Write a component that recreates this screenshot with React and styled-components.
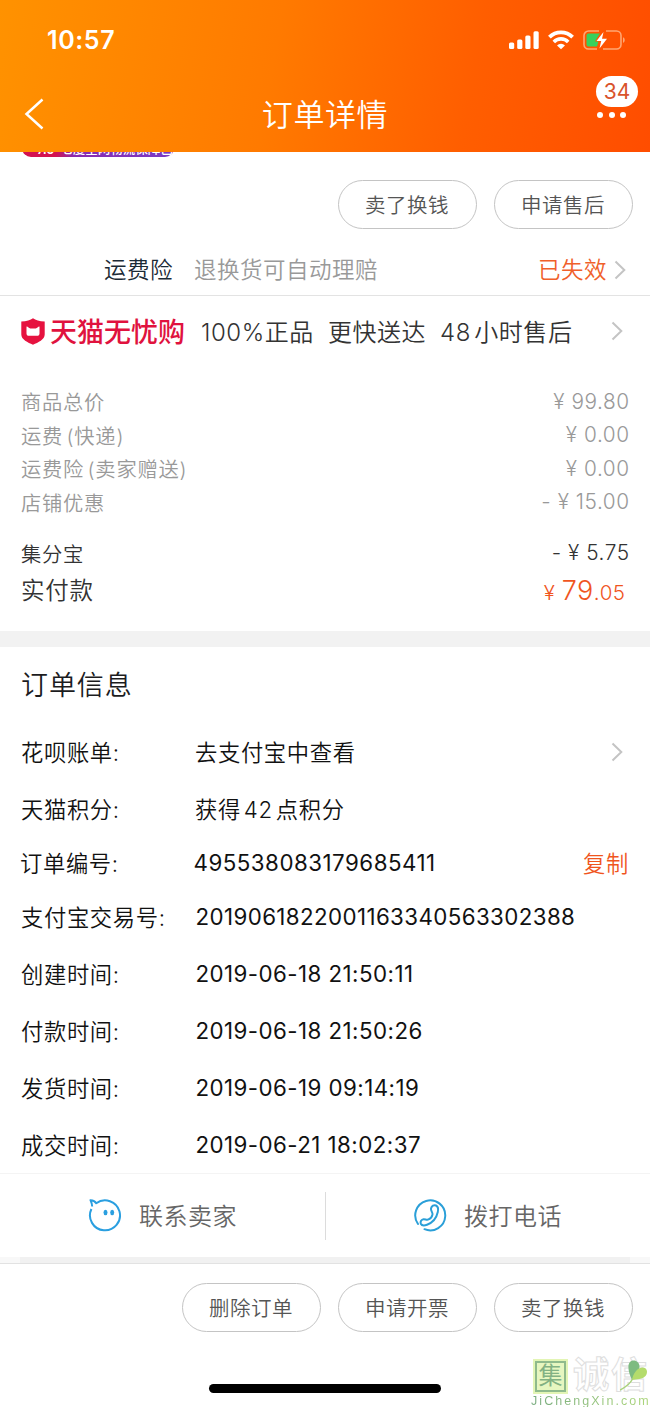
import React from 'react';
import styled, { createGlobalStyle } from 'styled-components';

const GlobalStyle = createGlobalStyle`
  * {
    box-sizing: border-box;
  }

  body {
    margin: 0;
    background: #fff;
    color: #1c1c1e;
    font-family: Inter, 'Noto Sans CJK SC', sans-serif;
    -webkit-font-smoothing: antialiased;
  }
`;

const StyledPage = styled.div`
  position: relative;
  width: 650px;
  height: 1407px;
  overflow: hidden;
  background: #fff;
`;

const StyledHeader = styled.header`
  height: 152px;
  background: linear-gradient(100deg, #ff9200 0%, #ff7a00 42%, #ff5e00 72%, #ff4d00 100%);
  color: #fff;
`;

const StyledStatusBar = styled.div`
  display: flex;
  align-items: center;
  justify-content: space-between;
  height: 80px;
  padding: 0 25px 0 47px;

  .time {
    font-size: 25px;
    font-weight: 600;
    letter-spacing: 0.6px;
  }

  .icons {
    display: flex;
    align-items: center;
    gap: 9px;
  }

  svg {
    display: block;
  }
`;

const StyledNav = styled.div`
  display: grid;
  grid-template-columns: 60px 1fr 60px;
  align-items: center;
  height: 70px;

  .back {
    padding: 2px 0 0 24px;
  }

  .title {
    margin: 0;
    font-size: 31px;
    font-weight: 350;
    letter-spacing: 0.6px;
    line-height: 40px;
    text-align: center;
  }

  .more {
    position: relative;
    display: flex;
    gap: 5.5px;
    padding-left: 7px;

    i {
      width: 6px;
      height: 6px;
      border-radius: 50%;
      background: #fff;
    }
  }

  .count {
    position: absolute;
    left: 6px;
    bottom: 11px;
    width: 42px;
    height: 31px;
    border-radius: 16px;
    background: #fff;
    color: #d9532b;
    font-size: 21px;
    line-height: 32px;
    text-align: center;
  }
`;

const StyledPromo = styled.div`
  display: flex;
  align-items: flex-end;
  height: 5px;
  margin-left: 22px;
  width: 152px;
  overflow: hidden;

  div {
    display: flex;
    flex: none;
    width: 152px;
    height: 22px;
    padding: 0 0 0 15px;
    border-radius: 0 0 9px 9px;
    background: linear-gradient(90deg, #d3134f 0 22%, #8a2bae 34%, #7a3cc4 100%);
    color: #fff;
    font-size: 12.5px;
    font-weight: 500;
    line-height: 29px;
    white-space: nowrap;
  }

  b {
    margin-right: 6px;
    font-weight: 600;
  }
`;

const StyledButtonRow = styled.div`
  display: flex;
  justify-content: flex-end;
  gap: 17px;
  padding: ${({ $top }) => $top}px 17px 0 0;
`;

const StyledPill = styled.button`
  width: 139px;
  height: 49px;
  padding: 0 1px 1px 0;
  border: 1px solid #c4c4c4;
  border-radius: 25px;
  background: #fff;
  color: #555;
  font-family: inherit;
  font-size: 20.5px;
  font-weight: 350;
  letter-spacing: 0.5px;
`;

const StyledInsurance = styled.div`
  display: flex;
  align-items: center;
  height: 67px;
  padding: 15px 24px 0 104px;
  border-bottom: 1px solid #e3e3e3;
  font-size: 22.5px;
  font-weight: 350;
  letter-spacing: 0.5px;

  span {
    padding-bottom: 3px;
  }

  .name {
    color: #1b2a36;
  }

  .desc {
    margin-left: 21px;
    color: #999;
  }

  .state {
    margin-left: auto;
    margin-right: 7px;
    color: #f0602a;
  }
`;

const StyledTmall = styled.div`
  display: flex;
  align-items: center;
  height: 70px;
  padding: 0 27px 0 21px;

  .brand {
    margin-left: 5px;
    padding-bottom: 2px;
    color: #e0123e;
    font-size: 27px;
    font-weight: 500;
  }

  .chevron {
    margin-left: auto;
  }
`;

const StyledPromises = styled.div`
  display: flex;
  gap: 14px;
  margin-left: 16px;
  padding-bottom: 2px;
  color: #333;
  font-size: 24px;
  font-weight: 350;
  letter-spacing: 0.55px;
  word-spacing: -4px;
`;

const StyledFees = styled.div`
  padding: 20px 21px 0;
  height: 265px;
`;

const StyledFee = styled.div`
  display: flex;
  align-items: center;
  justify-content: space-between;
  height: 33.5px;
  color: #999;
  font-size: 20.3px;
  font-weight: 350;
  letter-spacing: 0.75px;

  .label {
    padding-bottom: 3px;
    word-spacing: -3px;
  }

  .value {
    padding-bottom: 3px;
    margin-right: -0.6px;
    font-size: 20.8px;
    letter-spacing: 0.55px;
    white-space: pre;
  }
`;

const StyledCredit = styled(StyledFee)`
  height: 38px;
  margin-top: 15px;
  color: #333;
`;

const StyledTotal = styled(StyledFee)`
  height: 36px;
  color: #333;
  font-size: 23.5px;

  .label {
    padding-bottom: 5px;
  }

  .value {
    padding-right: 4px;
    padding-bottom: 2px;
    color: #f0551e;
    font-size: 20.5px;
  }

  big {
    font-size: 27px;
  }
`;

const StyledDivider = styled.div`
  height: 16px;
  background: #f2f2f2;
`;

const StyledInfoTitle = styled.h2`
  margin: 0;
  height: 76px;
  padding-left: 21px;
  font-size: 27px;
  font-weight: 350;
  letter-spacing: 0.9px;
  line-height: 78px;
`;

const StyledInfoRow = styled.div`
  display: flex;
  align-items: center;
  height: ${({ $short }) => ($short ? 51 : 57)}px;
  padding: 0 ${({ $chevron }) => ($chevron ? 27 : 21)}px 0 ${({ $short }) => ($short ? 20 : 21)}px;
  color: #111;
  font-size: 22.3px;
  font-weight: 350;
  letter-spacing: 0.65px;
  word-spacing: -4px;

  span {
    padding-bottom: 2px;
  }

  .label {
    width: ${({ $short }) => ($short ? 173 : 174)}px;
    white-space: nowrap;
  }

  .action {
    margin-left: auto;
    color: #f0551e;
  }

  .chevron {
    margin-left: auto;
  }
`;

const StyledDigits = styled.div`
  padding-left: 0.5px;
  font-weight: 380;
  letter-spacing: ${({ $spacing }) => $spacing}px;
  word-spacing: 0;
`;

const StyledContact = styled.div`
  display: grid;
  grid-template-columns: 1fr 1fr;
  align-items: center;
  height: 84px;
  border-top: 1px solid #f4f4f4;
`;

const StyledContactItem = styled.div`
  display: flex;
  align-items: center;
  height: 48px;
  padding-left: ${({ $bordered }) => ($bordered ? 87 : 88)}px;
  padding-bottom: 2px;
  border-left: ${({ $bordered }) => ($bordered ? '1px solid #dcdcdc' : 'none')};
  color: #666;
  font-size: 24px;
  font-weight: 350;
  letter-spacing: 0.5px;

  svg {
    margin-right: 17px;
  }
`;

const StyledBand = styled.div`
  height: 7px;
  border-bottom: 1px solid #e2e2e2;
  background: linear-gradient(90deg, #f8f8f8 0 20px, #f1f1f1 20px 630px, #f8f8f8 630px);
`;

const StyledHomeBar = styled.div`
  position: absolute;
  left: 209px;
  bottom: 14px;
  width: 232px;
  height: 9px;
  border-radius: 5px;
  background: #000;
`;

const StyledWatermark = styled.div`
  position: absolute;
  left: 531px;
  top: 1358px;
  width: 119px;

  .marks {
    display: flex;
    align-items: center;
    height: 36px;
    padding-left: 4px;
  }

  .seal {
    width: 31px;
    height: 31px;
    margin-right: 7px;
    outline: 2px solid #e3f5b5;
    border: 2px solid #8fba8c;
    background: #e6f6c0;
    color: #82b183;
    font-size: 24px;
    font-weight: 400;
    line-height: 26px;
    text-align: center;
  }

  .name {
    height: 36px;
    color: #fff;
    font-size: 36px;
    font-weight: 700;
    letter-spacing: 2px;
    line-height: 34px;
    white-space: nowrap;
    -webkit-text-stroke: 1px #dedede;
  }

  .leaf {
    position: absolute;
    left: 89px;
    top: 1px;
  }

  .domain {
    margin-top: 1px;
    color: transparent;
    background: linear-gradient(90deg, #79ac80, #acd67a);
    background-clip: text;
    font-family: 'Liberation Sans', Arial, sans-serif;
    font-size: 12.5px;
    letter-spacing: 2.05px;
    line-height: 12px;
    white-space: nowrap;
  }
`;

const Chevron = () => (
  <svg className="chevron" width="12" height="20" viewBox="0 0 12 20" fill="none">
    <path d="M1.5 1.5 10.3 10l-8.8 8.5" stroke="#c4c4c4" strokeWidth="2" />
  </svg>
);

const SignalIcon = () => (
  <svg width="30" height="20" viewBox="0 0 30 20" fill="#fff">
    <rect x="0" y="12.5" width="5.2" height="6.5" rx="1.5" />
    <rect x="8.2" y="9.5" width="5.2" height="9.5" rx="1.5" />
    <rect x="16.3" y="5.5" width="5.2" height="13.5" rx="1.5" />
    <rect x="24.5" y="1.2" width="5.2" height="17.8" rx="1.5" />
  </svg>
);

const WifiIcon = () => (
  <svg width="26" height="20" viewBox="0 0 26 20" fill="none" stroke="#fff">
    <path d="M1.4 7.2a16.3 16.3 0 0 1 23.2 0" strokeWidth="3.8" />
    <path d="M5.8 11.9a10.2 10.2 0 0 1 14.4 0" strokeWidth="3.6" />
    <path d="M13 19.2 9 15.4a5.7 5.7 0 0 1 8 0z" fill="#fff" stroke="none" />
  </svg>
);

const BatteryIcon = () => (
  <svg width="42" height="20" viewBox="0 0 42 20" fill="none">
    <path
      d="M16 1H5.5A4.5 4.5 0 0 0 1 5.5v9A4.5 4.5 0 0 0 5.5 19H14M23 1h10.5A4.5 4.5 0 0 1 38 5.5v9a4.5 4.5 0 0 1-4.5 4.5H20"
      stroke="#ffa672"
      strokeWidth="1.6"
    />
    <path d="M40 7.2c2.3.7 2.3 4.9 0 5.6z" fill="#ffa672" />
    <path d="M5.5 3.5H17L12 11.5h3.5L14 16.5H5.5a2 2 0 0 1-2-2v-9a2 2 0 0 1 2-2z" fill="#37d15c" />
    <path d="M20.5 2 13.5 11h4.7l-1.7 7.5 7.5-9.700h-5z" fill="#fff" />
  </svg>
);

const ShieldIcon = () => (
  <svg width="24" height="27" viewBox="0 0 24 27">
    <path
      d="M12 .3c2.5 1.9 6.5 3 11.7 3.2v13c0 5-6.500 8-11.700 10.200C6.800 24.500.3 21.500.3 16.500v-13C5.500 3.300 9.500 2.200 12 .3z"
      fill="#e6123f"
    />
    <path
      d="M5.500 8.500c2 0 2 1.900 3.800 1.900h5.400c1.800 0 1.800-1.900 3.800-1.900v7c0 1.500-1 2.300-2.300 2.300H7.800c-1.300 0-2.300-.8-2.300-2.300z"
      fill="#fff"
    />
  </svg>
);

const WangwangIcon = () => (
  <svg width="34" height="34" viewBox="0 0 34 34" fill="none" stroke="#2a9fe0" strokeWidth="2">
    <path
      d="M4.200 8.500C4 6 3.300 4 2.500 2.200 5 2.300 7 3 8.200 5.200A15 15 0 1 1 3.400 11"
      strokeLinejoin="round"
    />
    <ellipse cx="17.500" cy="14.500" rx="2" ry="2.700" fill="#2a9fe0" stroke="none" />
    <ellipse cx="24.200" cy="14.500" rx="2" ry="2.700" fill="#2a9fe0" stroke="none" />
  </svg>
);

const PhoneIcon = () => (
  <svg
    width="34"
    height="34"
    viewBox="0 0 34 34"
    fill="none"
    stroke="#2a9fd8"
    strokeWidth="2"
    strokeLinecap="round"
    strokeLinejoin="round">
    <path d="M5 26A15 15 0 1 1 11.500 31.200" />
    <path d="M18 10.500c.5-2.500 3-4 5-3s2.500 3.500 1.800 6.500c-1.300 6-5.500 10.800-10.800 12.700-2.700 1-5.300.8-6.200-1-.8-2 .7-4.200 2.700-4.500 1.800-.2 2.700.8 4.500.4 2.200-.6 4-2.700 4.500-5 .4-2.300-1.900-3.700-1.500-6.100z" />
  </svg>
);

const LeafIcon = () => (
  <svg className="leaf" width="30" height="34" viewBox="0 0 30 34">
    <path d="M12 21C8.500 14 7 6 10 3c4-3.500 10 0 9.500 5-.5 4-4 7.500-7.500 13z" fill="#7dbb80" />
    <path d="M12 21c1-6 5-12 10-12.500 5-.5 6.500 5 3.500 8.500-3 3.200-8.500 3.300-13.500 4z" fill="#b4dc6c" />
    <path d="M12.500 20C10 25 6 28 0 31" fill="none" stroke="#a8d27a" strokeWidth="1.500" />
  </svg>
);

const fees = [
  ['商品总价', '¥ 99.80'],
  ['运费 (快递)', '¥ 0.00'],
  ['运费险 (卖家赠送)', '¥ 0.00'],
  ['店铺优惠', '- ¥ 15.00'],
];

const times = [
  ['创建时间:', '2019-06-18 21:50:11'],
  ['付款时间:', '2019-06-18 21:50:26'],
  ['发货时间:', '2019-06-19 09:14:19'],
  ['成交时间:', '2019-06-21 18:02:37'],
];

const App = () => (
  <StyledPage>
    <GlobalStyle />

    <StyledHeader>
      <StyledStatusBar>
        <span className="time">10:57</span>
        <div className="icons">
          <SignalIcon />
          <WifiIcon />
          <BatteryIcon />
        </div>
      </StyledStatusBar>
      <StyledNav>
        <div className="back">
          <svg width="20" height="32" viewBox="0 0 20 32" fill="none">
            <path d="M18.500 1.500 2.500 16l16 14.500" stroke="#fff" strokeWidth="2.500" />
          </svg>
        </div>
        <h1 className="title">订单详情</h1>
        <div className="more">
          <i />
          <i />
          <i />
          <span className="count">34</span>
        </div>
      </StyledNav>
    </StyledHeader>

    <StyledPromo>
      <div>
        <b>7.6</b>
        七度全网物流保障已
      </div>
    </StyledPromo>

    <StyledButtonRow $top={23}>
      <StyledPill>卖了换钱</StyledPill>
      <StyledPill>申请售后</StyledPill>
    </StyledButtonRow>

    <StyledInsurance>
      <span className="name">运费险</span>
      <span className="desc">退换货可自动理赔</span>
      <span className="state">已失效</span>
      <Chevron />
    </StyledInsurance>

    <StyledTmall>
      <ShieldIcon />
      <span className="brand">天猫无忧购</span>
      <StyledPromises>
        <span>100%正品</span>
        <span>更快送达</span>
        <span>48 小时售后</span>
      </StyledPromises>
      <Chevron />
    </StyledTmall>

    <StyledFees>
      {fees.map(([label, value]) => (
        <StyledFee key={label}>
          <span className="label">{label}</span>
          <span className="value">{value}</span>
        </StyledFee>
      ))}
      <StyledCredit>
        <span className="label">集分宝</span>
        <span className="value">- ¥ 5.75</span>
      </StyledCredit>
      <StyledTotal>
        <span className="label">实付款</span>
        <span className="value">
          ¥ <big>79</big>.05
        </span>
      </StyledTotal>
    </StyledFees>

    <StyledDivider />

    <StyledInfoTitle>订单信息</StyledInfoTitle>
    <StyledInfoRow $chevron>
      <span className="label">花呗账单:</span>
      <span>去支付宝中查看</span>
      <Chevron />
    </StyledInfoRow>
    <StyledInfoRow>
      <span className="label">天猫积分:</span>
      <span>获得 42 点积分</span>
    </StyledInfoRow>
    <StyledInfoRow $short>
      <span className="label">订单编号:</span>
      <StyledDigits $spacing={0.5}>495538083179685411</StyledDigits>
      <span className="action">复制</span>
    </StyledInfoRow>
    <StyledInfoRow>
      <span className="label">支付宝交易号:</span>
      <StyledDigits $spacing={0.4}>2019061822001163340563302388</StyledDigits>
    </StyledInfoRow>
    {times.map(([label, value]) => (
      <StyledInfoRow key={label}>
        <span className="label">{label}</span>
        <StyledDigits $spacing={0.45}>{value}</StyledDigits>
      </StyledInfoRow>
    ))}

    <StyledContact>
      <StyledContactItem>
        <WangwangIcon />
        <span>联系卖家</span>
      </StyledContactItem>
      <StyledContactItem $bordered>
        <PhoneIcon />
        <span>拨打电话</span>
      </StyledContactItem>
    </StyledContact>
    <StyledBand />

    <StyledButtonRow $top={19}>
      <StyledPill>删除订单</StyledPill>
      <StyledPill>申请开票</StyledPill>
      <StyledPill>卖了换钱</StyledPill>
    </StyledButtonRow>

    <StyledHomeBar />
    <StyledWatermark>
      <div className="marks">
        <span className="seal">集</span>
        <span className="name">诚信</span>
      </div>
      <LeafIcon />
      <div className="domain">JiChengXin.com</div>
    </StyledWatermark>
  </StyledPage>
);

export default App;
